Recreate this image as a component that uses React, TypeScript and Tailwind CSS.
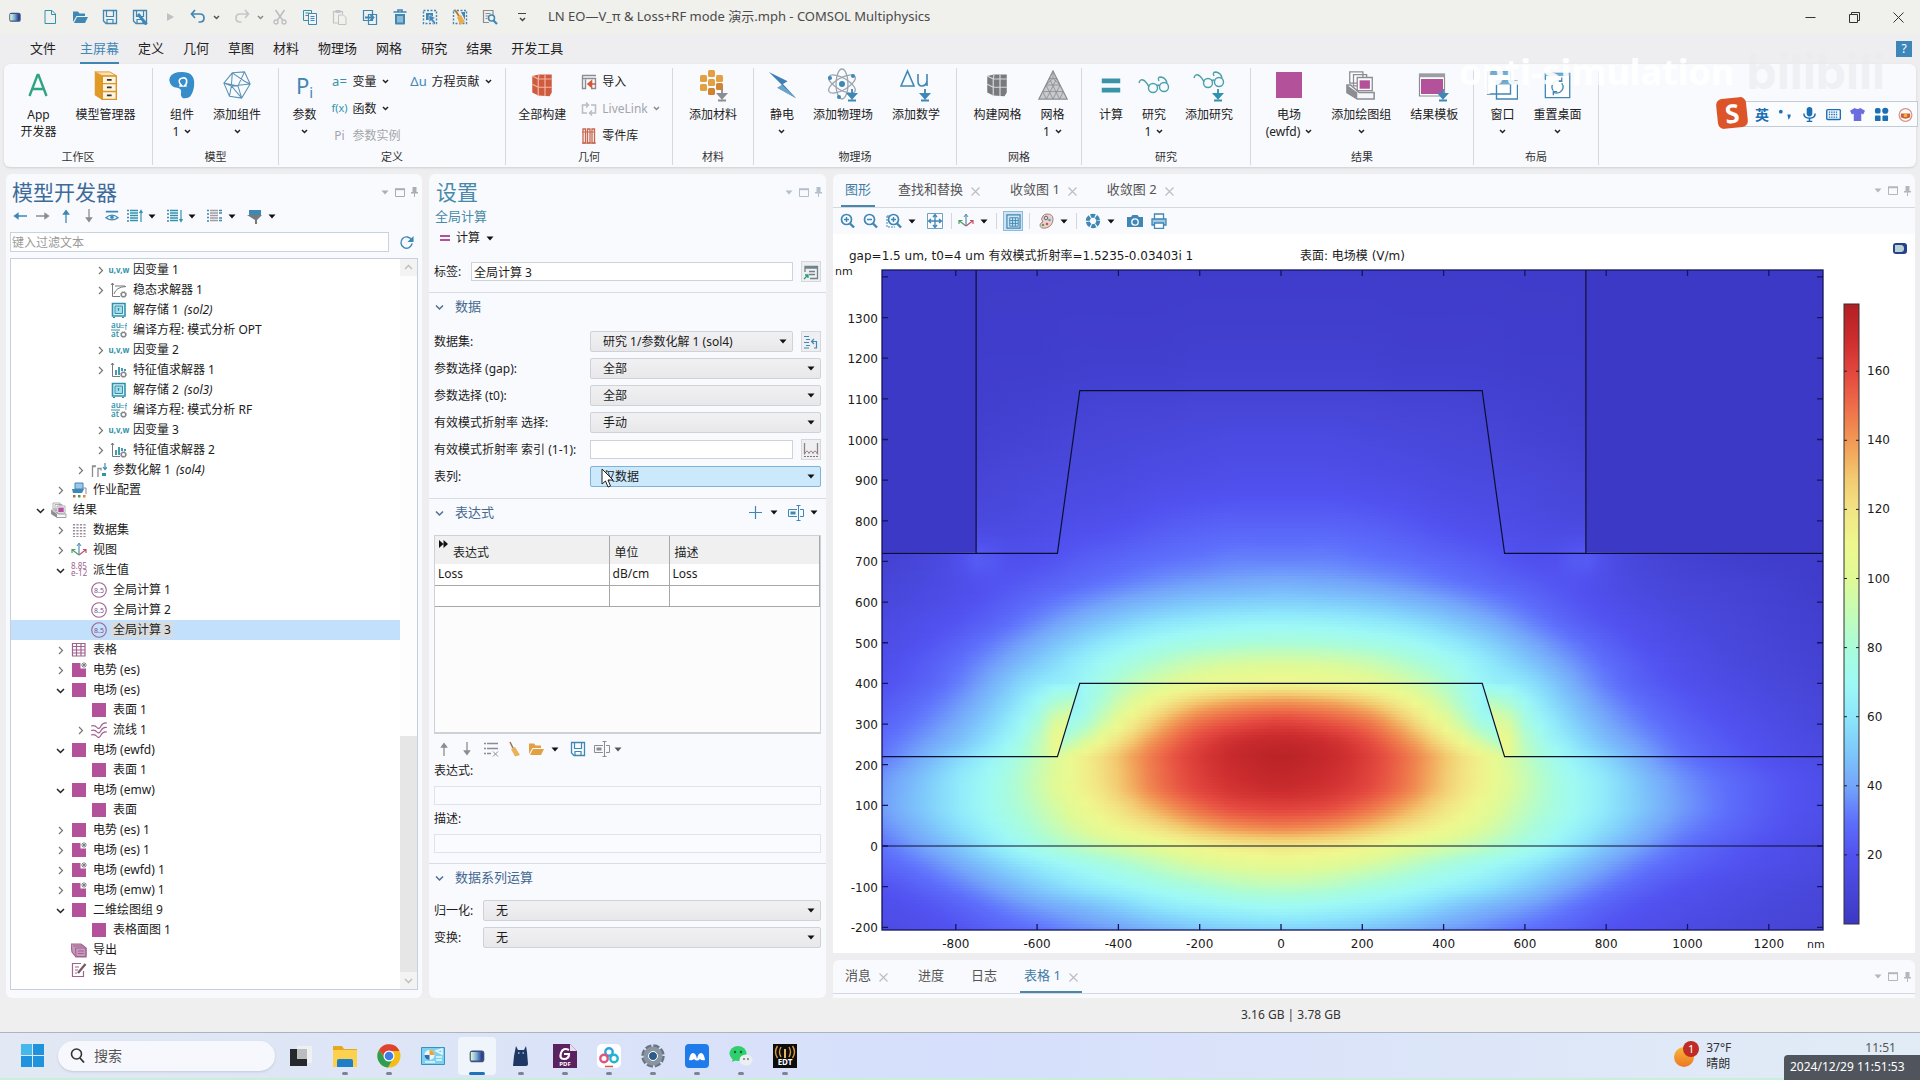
import type { ReactNode } from "react";

const BLUE = "#3f87b5";
const TEAL = "#3392ab";
const GRAY = "#8b8d92";
const PINK = "#b3529a";
const MAUVE = "#a0628f";

type SvgProps = { size?: number; vb?: number; className?: string; children: ReactNode };

function Svg({ size = 16, vb = 16, className = "", children }: SvgProps) {
  return (
    <svg width={size} height={size} viewBox={`0 0 ${vb} ${vb}`} fill="none" className={`shrink-0 ${className}`} aria-hidden="true">
      {children}
    </svg>
  );
}

/* ---------- small shared bits ---------- */

function Caret({ color = "#111" }: { color?: string }) {
  return (
    <svg width="8" height="5" viewBox="0 0 8 5" className="shrink-0" aria-hidden="true">
      <path d="M0.5 0.5h7L4 4.5z" fill={color} />
    </svg>
  );
}

function Chevron({ color = "#222" }: { color?: string }) {
  return (
    <svg width="7" height="5" viewBox="0 0 7 5" fill="none" className="shrink-0" aria-hidden="true">
      <path d="M1 1l2.5 2.5L6 1" stroke={color} strokeWidth="1.5" />
    </svg>
  );
}

function PanelControls({ tone = "#a9aeb5" }: { tone?: string }) {
  return (
    <div className="flex items-center gap-[6px]">
      <button type="button" aria-label="菜单">
        <Caret color={tone} />
      </button>
      <button type="button" aria-label="最大化">
        <svg width="10" height="9" viewBox="0 0 10 9" fill="none">
          <path d="M0.5 1.5h9v7h-9z" stroke={tone} />
          <path d="M0 1.2h10" stroke={tone} strokeWidth="2" />
        </svg>
      </button>
      <button type="button" aria-label="固定">
        <svg width="7" height="10" viewBox="0 0 7 10">
          <path d="M1.5 0h4v5H7v1.5H4V10H3V6.500H0V5h1.500z" fill={tone} />
        </svg>
      </button>
    </div>
  );
}

function AppLogo({ size = 16 }: { size?: number }) {
  return (
    <Svg size={size}>
      <defs>
        <linearGradient id={`logo${size}`} x1="0" x2="1">
          <stop offset="0" stopColor="#eef6c9" />
          <stop offset="0.45" stopColor="#7fb6dc" />
          <stop offset="1" stopColor="#1b2f78" />
        </linearGradient>
      </defs>
      <rect x="1.500" y="3" width="13" height="10.500" rx="2.500" fill="#3d4f86" />
      <path d="M2.500 4.500h8q2.500 0 2.500 3.700T10.500 12h-8z" fill={`url(#logo${size})`} />
    </Svg>
  );
}

/* ---------- title bar ---------- */

const NewDoc = () => (
  <Svg><path d="M3 1.500h7l3.500 3.500v9.500H3zM9.500 1.500v4h4" stroke={TEAL} /></Svg>
);
const Folder = ({ color = BLUE }: { color?: string }) => (
  <Svg><path d="M1 13V2.500h5l1.500 2H13V7H4.500L1 13z" fill={color} /><path d="M5 8h11l-3 6H2z" fill={color} /></Svg>
);
const Disk = ({ pen = false }: { pen?: boolean }) => (
  <Svg>
    <path d="M1.500 1.500h13v13H4l-2.500-2.500z" stroke={BLUE} strokeWidth="1.300" />
    <path d="M4.500 1.500v6h7v-6M5 14.500V10.500h6v4" stroke={BLUE} strokeWidth="1.200" />
    {pen && <path d="M6 5l8.500 10.500" stroke={BLUE} strokeWidth="3" />}
  </Svg>
);
const Undo = ({ color = BLUE, flip = false }: { color?: string; flip?: boolean }) => (
  <Svg className={flip ? "-scale-x-100" : ""}>
    <path d="M5 1L1.500 5 5 9M2 5h8q4 0 4 4t-4 4H8.500" stroke={color} strokeWidth="1.700" />
  </Svg>
);
const Cut = () => (
  <Svg>
    <path d="M3.500 1l7 10M12.500 1l-7 10" stroke="#bcbfc2" strokeWidth="1.600" />
    <circle cx="4" cy="13" r="2" stroke="#bcbfc2" strokeWidth="1.300" />
    <circle cx="12" cy="13" r="2" stroke="#bcbfc2" strokeWidth="1.300" />
  </Svg>
);
const Copy = () => (
  <Svg>
    <path d="M1.500 1.500h8v10h-8zM3.500 4h4M3.500 6.500h3" stroke={TEAL} />
    <path d="M6.500 4.500h8v11h-8z" fill="#eef6fb" stroke={BLUE} />
    <path d="M8.500 7.500h4M8.500 9.500h4M8.500 11.500h4" stroke={BLUE} />
  </Svg>
);
const Paste = () => (
  <Svg>
    <path d="M6 14H1.500V2.500h9V5M4 1.500h4v2H4z" stroke="#c0c3c6" strokeWidth="1.200" />
    <path d="M6.500 6h5l2.500 2.500v7H6.500z" stroke="#c0c3c6" />
  </Svg>
);
const Duplicate = () => (
  <Svg>
    <path d="M1.500 1.500h9v10h-9zM6.500 5.500h8v10h-8z" stroke={BLUE} strokeWidth="1.200" />
    <path d="M3 8.500h8M8.500 5.500l3 3-3 3" stroke={BLUE} strokeWidth="1.800" />
  </Svg>
);
const Trash = () => (
  <Svg>
    <path d="M1.500 3h13M6 2.500V1h4v1.500" stroke={BLUE} strokeWidth="1.600" />
    <path d="M3 5h10v9.500q0 1-1 1H4q-1 0-1-1z" fill={BLUE} />
    <path d="M6 7v6.500M8 7v6.500M10 7v6.500" stroke="#dcebf5" />
  </Svg>
);
const SelectBox = () => (
  <Svg>
    <path d="M1.500 1.500h13v13h-13z" stroke={BLUE} strokeWidth="1.400" strokeDasharray="2 1.500" />
    <path d="M4 4h7v7H4z" fill={BLUE} />
    <path d="M7 6l7 3-3 1 3 4-1.500 1.500-3.500-4-2 2z" fill={BLUE} stroke="#eef" strokeWidth="0.600" />
  </Svg>
);
const BrushSelect = () => (
  <Svg>
    <path d="M1.500 1.500h13v13h-13z" stroke={BLUE} strokeWidth="1.400" strokeDasharray="2 1.500" />
    <path d="M9 3h4v8z" fill={BLUE} />
    <path d="M3 1l4 6" stroke="#b77a35" strokeWidth="2" />
    <path d="M5 8l4-2 4 7-5 3z" fill="#e9ac50" />
  </Svg>
);
const DocSearch = () => (
  <Svg>
    <path d="M11 7V1.500H1.500v12H7M3.500 4.500h5M3.500 7h3M3.500 9.500h2" stroke={GRAY} strokeWidth="1.200" />
    <circle cx="9.500" cy="9" r="3" stroke={BLUE} strokeWidth="1.500" />
    <path d="M11.500 11.500l3.500 3.500" stroke={BLUE} strokeWidth="2.200" />
  </Svg>
);

function TitleBar() {
  const tools: [string, ReactNode][] = [
    ["新建", <NewDoc />],
    ["打开", <Folder />],
    ["保存", <Disk />],
    ["另存为", <Disk pen />],
    ["运行", <Svg><path d="M5 4l7 4-7 4z" fill="#bfc2c5" /></Svg>],
  ];
  const edit: [string, ReactNode][] = [
    ["剪切", <Cut />],
    ["复制", <Copy />],
    ["粘贴", <Paste />],
    ["复制粘贴", <Duplicate />],
    ["删除", <Trash />],
    ["选择", <SelectBox />],
    ["清除选择", <BrushSelect />],
    ["查找", <DocSearch />],
  ];
  return (
    <header className="flex h-[34px] items-center bg-[#f0f0ed] pl-2 pr-4">
      <AppLogo size={14} />
      <div className="ml-5 flex items-center gap-[14px]">
        {tools.map(([label, icon]) => (
          <button key={label} type="button" aria-label={label}>{icon}</button>
        ))}
      </div>
      <div className="ml-3 flex items-center gap-[6px]">
        <button type="button" aria-label="撤消" className="flex items-center gap-[7px]"><Undo /><Chevron color="#555" /></button>
        <button type="button" aria-label="重做" className="ml-2 flex items-center gap-[7px]"><Undo color="#c3c6c9" flip /><Chevron color="#888" /></button>
      </div>
      <div className="ml-2 flex items-center gap-[14px]">
        {edit.map(([label, icon]) => (
          <button key={label} type="button" aria-label={label}>{icon}</button>
        ))}
      </div>
      <button type="button" aria-label="自定义" className="ml-5 flex flex-col items-center gap-[3px]">
        <span className="h-px w-2 bg-[#444]" />
        <Chevron color="#444" />
      </button>
      <h1 className="ml-[22px] text-[13px] text-[#4a4a4a]">LN EO—V_π &amp; Loss+RF mode 演示.mph - COMSOL Multiphysics</h1>
      <div className="ml-auto flex items-center gap-[33px] text-[#333]">
        <button type="button" aria-label="最小化"><Svg size={11} vb={11}><path d="M0.500 5.500h10" stroke="#333" /></Svg></button>
        <button type="button" aria-label="还原"><Svg size={11} vb={11}><path d="M0.500 2.500h8v8h-8zM2.500 2.500v-2h8v8h-2" stroke="#333" /></Svg></button>
        <button type="button" aria-label="关闭"><Svg size={11} vb={11}><path d="M0.500 0.500l10 10M10.500 0.500l-10 10" stroke="#333" /></Svg></button>
      </div>
    </header>
  );
}

const MENU = ["定义", "几何", "草图", "材料", "物理场", "网格", "研究", "结果", "开发工具"];

function MenuTabs() {
  return (
    <nav className="flex h-[30px] items-stretch gap-[19px] pl-[30px] pr-2 text-[13px] text-[#222]">
      <a href="#file" className="mr-[5px] flex items-center">文件</a>
      <a href="#home" className="flex items-center border-b-2 border-[#3f87b5] pt-[2px] text-[#3f87b5]">主屏幕</a>
      {MENU.map((m) => (
        <a key={m} href={`#${m}`} className="flex items-center">{m}</a>
      ))}
      <button type="button" className="ml-auto h-4 w-4 self-center bg-[#3d86ba] text-[12px] leading-4 text-white">?</button>
    </nav>
  );
}

/* ---------- ribbon icons ---------- */

const DownArrow = ({ color = BLUE }: { color?: string }) => (
  <path d="M26 21v8M22 26h8l-4 4.500zM22 32.500h8" stroke={color} strokeWidth="1.800" fill={color} />
);
const Cabinet = () => (
  <Svg size={30} vb={32}>
    <path d="M4 2l8 4v26L4 27z" fill="#e09a27" />
    <path d="M4 2h16l7 4H12z" fill="#f7e2bb" stroke="#e09a27" />
    <path d="M12 6.500h15v25H12zM12 14.500h15M12 23h15" fill="#fdf4e2" stroke="#dd9423" strokeWidth="1.500" />
    <path d="M17 10.500h5M17 18.500h5M17 27h5" stroke="#333" strokeWidth="1.800" />
  </Svg>
);
const Blob = () => (
  <Svg size={30} vb={32}>
    <path d="M3 8q2-6 13-6 13 0 13 12 0 8-4 14-3 3-8 2-3-2-2-6 1-4-4-5-7-1-8-6-1-3 0-5z" fill="#368dc9" />
    <path d="M13 17h3q-3-2-3-5t4-3.500 4 3.500-3 5h3" stroke="#fff" strokeWidth="1.700" />
  </Svg>
);
const WireCube = () => (
  <Svg size={30} vb={32}>
    <path d="M11 3l13-1 6 13-9 15-13-2L2 14zM2 14l15 3 7-15M17 17l4 13M11 3l-1 14 11 13M2 14l8 3 20-2M11 3l13 9 6 3M8 28l2-11" stroke="#5a93b5" strokeWidth="1.100" />
  </Svg>
);
const SolidCube = ({ color, light }: { color: string; light: string }) => (
  <Svg size={24} vb={32}>
    <path d="M3 4l9-2h17v24l-3 5-15-1-8-4z" fill={color} />
    <path d="M11 8h18M11 8v23M20 8v23M11 19h18M3 4l8 4M3 15l8 4M12 2l-1 6M20 2v6" stroke={light} strokeWidth="1.600" />
  </Svg>
);
const Blocks = () => (
  <Svg size={34} vb={34}>
    <g fill="#e3a043">
      <rect x="12" y="2" width="7" height="7" rx="1.500" /><rect x="4" y="7" width="7" height="7" rx="1.500" />
      <rect x="20" y="7" width="7" height="7" rx="1.500" /><rect x="12" y="11" width="7" height="7" rx="1.500" />
      <rect x="4" y="16" width="7" height="7" rx="1.500" />
    </g>
    <g fill="#d0842f"><rect x="20" y="15" width="7" height="7" rx="1.500" /><rect x="12" y="20" width="7" height="7" rx="1.500" /></g>
    <DownArrow color={GRAY} />
  </Svg>
);
const Bolt = () => (
  <Svg size={30} vb={32}><path d="M2 2l20 10-5 3 14 15-20-11 5-3z" fill="#3f7fb5" /><path d="M16 16l15 14-20-11z" fill="#6ba5cb" /></Svg>
);
const Atom = () => (
  <Svg size={34} vb={34}>
    <g stroke="#9aa5ae" strokeWidth="1.300">
      <ellipse cx="16" cy="16" rx="6" ry="15" />
      <ellipse cx="16" cy="16" rx="6" ry="15" transform="rotate(60 16 16)" />
      <ellipse cx="16" cy="16" rx="6" ry="15" transform="rotate(-60 16 16)" />
    </g>
    <g fill={BLUE}><circle cx="16" cy="16" r="3" /><circle cx="4" cy="10" r="2" /><circle cx="27" cy="8" r="2" /><circle cx="13" cy="29" r="2" /></g>
    <DownArrow />
  </Svg>
);
const DeltaU = () => (
  <Svg size={34} vb={34}>
    <path d="M2 18L8.500 3 15 18zM19 6v7q0 5 4 5t5-5V6v12" stroke={BLUE} strokeWidth="1.600" />
    <DownArrow />
  </Svg>
);
const MeshTriangle = () => (
  <Svg size={30} vb={32}>
    <path d="M16 1l15 30H1z" fill="#c9cacc" stroke={GRAY} strokeWidth="1.300" />
    <path d="M12 9h8M8.500 16h15M5 23h22M12 9l11 22M20 9L9 31M8.500 16L16 31M23.500 16L16 31M5 23l4 8M27 23l-4 8M16 1v8l-7.500 7M16 9l7.500 7" stroke={GRAY} strokeWidth="0.900" />
  </Svg>
);
const Equals = () => (
  <Svg size={24} vb={26}><path d="M3 8.500h20M3 18.500h20" stroke="#3a93a8" strokeWidth="5" /></Svg>
);
const Glasses = ({ arrow = false }: { arrow?: boolean }) => (
  <Svg size={34} vb={34}>
    <g transform={arrow ? "translate(0 -5)" : ""}>
      <circle cx="16" cy="20" r="4.500" stroke="#4aa0ab" strokeWidth="1.400" />
      <circle cx="27" cy="19" r="4.500" stroke="#4aa0ab" strokeWidth="1.400" />
      <path d="M2 15q1-4 4-3t6 7M22 13q-2-4 2-4 5 1 6 6M20 18q1.500-2 2.500 0" stroke="#4aa0ab" strokeWidth="1.400" />
    </g>
    {arrow && <DownArrow color={TEAL} />}
  </Svg>
);
const PlotSquare = () => (
  <Svg size={26} vb={26}><path d="M0 0h26v26H0z" fill={PINK} /></Svg>
);
const PlotStack = ({ size = 30 }: { size?: number }) => (
  <Svg size={size} vb={32}>
    <path d="M1 16v8l11 7h18v-7H14L5 16z" fill="#f6f6f8" stroke={GRAY} strokeWidth="1.600" />
    <path d="M1 16v8l11 7v-7z" fill={GRAY} />
    <path d="M4 2h14v12H4zM8 5h14v12H8z" fill="#fff" stroke={GRAY} strokeWidth="1.400" />
    <path d="M12 8h16v14H12z" fill="#fff" stroke={GRAY} strokeWidth="1.400" />
    <path d="M14.500 11h11v9h-11z" fill={PINK} />
  </Svg>
);
const ResultTemplate = () => (
  <Svg size={34} vb={34}>
    <path d="M2.500 6h25v22h-25z" fill="#fff" stroke={GRAY} strokeWidth="1.200" />
    <path d="M2 7.500h26" stroke="#9b9da2" strokeWidth="3.500" />
    <path d="M4 11h22v15H4z" fill={PINK} />
    <DownArrow />
  </Svg>
);
const Windows = () => (
  <Svg size={32} vb={32}>
    <path d="M1.500 3h23v22h-23zM10.500 12h21v18h-21z" fill="#fff" stroke={BLUE} strokeWidth="1.400" />
    <path d="M1.500 4.500h23M10.500 14h21" stroke="#74abd0" strokeWidth="3" />
  </Svg>
);
const ResetDesk = () => (
  <Svg size={30} vb={32}>
    <path d="M2.500 3.500h26v26h-26z" fill="#fff" stroke={BLUE} strokeWidth="1.400" />
    <path d="M2.500 5h26" stroke="#74abd0" strokeWidth="3" />
    <path d="M20 12q-6-2.500-9 2t0 8M11 24q6 2 9-2t0-8M20 8v4h-4M11 27v-4h4" stroke={BLUE} strokeWidth="1.400" />
  </Svg>
);
const ImportIcon = () => (
  <Svg><path d="M1 1.500h14M1.500 1.500v13h3v-9M1.500 4.500h13v10H10" stroke={GRAY} strokeWidth="1.400" /><path d="M15 10H8M10.500 7L7 10l3.500 3z" stroke="#cf5b3a" strokeWidth="1.600" fill="#cf5b3a" /></Svg>
);
const LinkIcon = () => (
  <Svg><path d="M6 12H1.500V4H7M10 4h4.500v8H9M5 1.500L7.500 4 5 6.500M11 9.500L8.500 12l2.500 2.500" stroke="#b9bcc0" strokeWidth="1.500" /></Svg>
);
const PartsIcon = () => (
  <Svg><path d="M2 1h2.500v14H2zM6.500 1H9v14H6.500zM11 1h2.500v14H11z" stroke="#c8674d" strokeWidth="1.300" /><path d="M1 4h13M1 15h14" stroke="#c8674d" /></Svg>
);

type BigProps = { icon: ReactNode; label: string; sub?: string; drop?: boolean };

// the icon takes no width, so the text alone spaces the buttons
function BigButton({ icon, label, sub, drop = false }: BigProps) {
  return (
    <button type="button" className="flex flex-col items-center whitespace-nowrap">
      <span className="flex h-[34px] w-0 items-center justify-center">{icon}</span>
      <span className="mt-1 block leading-[17px]">{label}</span>
      <span className="flex h-[17px] items-center gap-[5px] leading-[17px]">
        {sub}
        {drop && <Chevron />}
      </span>
    </button>
  );
}

function SmallButton({ icon, label, drop = false, off = false }: { icon: ReactNode; label: string; drop?: boolean; off?: boolean }) {
  return (
    <button type="button" disabled={off} className={`flex h-[27px] items-center gap-[5px] whitespace-nowrap ${off ? "text-[#a3a5a9]" : "text-[#222]"}`}>
      <span className="flex w-4 items-center justify-center">{icon}</span>
      {label}
      {drop && <Chevron color={off ? "#888" : "#222"} />}
    </button>
  );
}

function Group({ title, className, children }: { title: string; className: string; children: ReactNode }) {
  return (
    <section className={`mb-[2px] mt-1 flex shrink-0 flex-col border-r border-[#d5d8de] ${className}`}>
      <div className="flex flex-1 justify-center gap-[19px]">{children}</div>
      <h2 className="text-center text-[11px] leading-4 text-[#333]">{title}</h2>
    </section>
  );
}

function Ribbon() {
  return (
    <div className="mx-1 flex h-[103px] rounded-md bg-[#f9fafe] text-[12px] text-[#222] shadow-sm">
      <Group title="工作区" className="w-[149px]">
        <BigButton icon={<Svg size={24} vb={24}><path d="M3.500 23L11.500 2h1l8 21M6.500 16h11" stroke="#2fa483" strokeWidth="2.400" /></Svg>} label="App" sub="开发器" />
        <BigButton icon={<Cabinet />} label="模型管理器" />
      </Group>
      <Group title="模型" className="w-[126px]">
        <BigButton icon={<Blob />} label="组件" sub="1" drop />
        <BigButton icon={<WireCube />} label="添加组件" drop />
      </Group>
      <Group title="定义" className="w-[227px]">
        <BigButton icon={<span className="text-[22px] leading-7 text-[#3f87b5]">P<sub className="text-[15px]">i</sub></span>} label="参数" drop />
        <div className="-ml-1 flex flex-col">
          <SmallButton icon={<span className="text-[13px] text-[#3392ab]">a=</span>} label="变量" drop />
          <SmallButton icon={<span className="text-[11px] text-[#3392ab]">f(x)</span>} label="函数" drop />
          <SmallButton icon={<span className="text-[12px]">Pi</span>} label="参数实例" off />
        </div>
        <div className="-ml-[9px]">
          <SmallButton icon={<span className="text-[13px] text-[#3f87b5]">Δu</span>} label="方程贡献" drop />
        </div>
      </Group>
      <Group title="几何" className="w-[167px]">
        <BigButton icon={<SolidCube color="#cf5b3f" light="#f2b6a4" />} label="全部构建" />
        <div className="-ml-1 flex flex-col">
          <SmallButton icon={<ImportIcon />} label="导入" />
          <SmallButton icon={<LinkIcon />} label="LiveLink" drop off />
          <SmallButton icon={<PartsIcon />} label="零件库" />
        </div>
      </Group>
      <Group title="材料" className="w-[81px]">
        <BigButton icon={<Blocks />} label="添加材料" />
      </Group>
      <Group title="物理场" className="w-[203px]">
        <BigButton icon={<Bolt />} label="静电" drop />
        <BigButton icon={<Atom />} label="添加物理场" />
        <BigButton icon={<DeltaU />} label="添加数学" />
      </Group>
      <Group title="网格" className="w-[125px]">
        <BigButton icon={<SolidCube color="#797a7e" light="#d6d7da" />} label="构建网格" />
        <BigButton icon={<MeshTriangle />} label="网格" sub="1" drop />
      </Group>
      <Group title="研究" className="w-[169px]">
        <BigButton icon={<Equals />} label="计算" />
        <BigButton icon={<Glasses />} label="研究" sub="1" drop />
        <BigButton icon={<Glasses arrow />} label="添加研究" />
      </Group>
      <Group title="结果" className="w-[223px]">
        <BigButton icon={<PlotSquare />} label="电场" sub="(ewfd)" drop />
        <BigButton icon={<PlotStack />} label="添加绘图组" drop />
        <BigButton icon={<ResultTemplate />} label="结果模板" />
      </Group>
      <Group title="布局" className="w-[125px]">
        <BigButton icon={<Windows />} label="窗口" drop />
        <BigButton icon={<ResetDesk />} label="重置桌面" drop />
      </Group>
    </div>
  );
}

/* ---------- model tree ---------- */

const Uvw = () => <span className="text-[8px] font-bold leading-4 text-[#3392ab]">u,v,w</span>;
const Gear = () => (
  <g><circle cx="12.500" cy="12.500" r="2.200" stroke="#85878b" strokeWidth="1.300" /><circle cx="12.500" cy="12.500" r="3" stroke="#85878b" strokeWidth="1" strokeDasharray="1 1.350" /></g>
);
const Stationary = () => (
  <Svg><path d="M1.500 1v13.500H9M0 3l1.500-2L3 3M3 12q2-7 12-7.500M4 4h10" stroke="#76797d" /><Gear /></Svg>
);
const Eigen = () => (
  <Svg><path d="M1.500 1v13.500H9M0 3l1.500-2L3 3" stroke="#76797d" /><path d="M5 13V8M8 13V5M11 9V6M14 9V7" stroke={TEAL} strokeWidth="1.800" /><Gear /></Svg>
);
const Store = () => (
  <Svg><path d="M1.500 1.500h12.500v12.500h-12.500z" stroke={TEAL} strokeWidth="1.600" fill="#d7f1f8" /><path d="M4 4h7.500v7.500H4z" stroke={TEAL} fill="#a7dceb" /><path d="M7.500 6v3M6.500 7h2M2 15.500h2M11 15.500h2" stroke={TEAL} /></Svg>
);
const Compile = () => (
  <Svg>
    <text x="0" y="6" fontSize="8" fontWeight="600" fill={TEAL}>au</text><text x="0" y="15" fontSize="8" fontWeight="600" fill={TEAL}>at</text>
    <path d="M0 8h9" stroke={TEAL} /><text x="9" y="8" fontSize="8" fill={TEAL}>=f</text><Gear />
  </Svg>
);
const ParamSol = () => (
  <Svg><path d="M1.500 15V4.500h3M7 15V6.500h3v2M1 4h4" stroke={GRAY} strokeWidth="1.300" /><path d="M11 11h4v3h-4z" fill={TEAL} /><path d="M14 1v6M12 5l2 2.500L16 5" stroke={BLUE} strokeWidth="1.200" /></Svg>
);
const JobConf = () => (
  <Svg><path d="M4 1h8v6H4z" fill="#9cc6ea" stroke={BLUE} /><path d="M1 7h12l-2 4H2z" fill={BLUE} /><path d="M12 6h3v6" stroke={GRAY} /><path d="M2 13h2.500v2.500H2z" fill="#b86b3a" /><path d="M7 13h2.500v2.500H7z" fill="#3f9a5f" /><path d="M12 13h2.500v2.500H12z" fill="#d68b2f" /></Svg>
);
const DataSet = () => (
  <Svg><path d="M3 2v13M6.500 2v13M10 2v13M13.500 2v13" stroke="#9b8f9b" strokeWidth="2.200" strokeDasharray="1.500 1.500" /></Svg>
);
const Axes = () => (
  <Svg><path d="M8 13V2" stroke="#4a8fae" strokeWidth="1.200" /><path d="M6 4l2-3 2 3" stroke="#4a8fae" /><path d="M8 13L1.500 8M1 11V7.500h3.500" stroke="#4f9d63" strokeWidth="1.200" /><path d="M8 13l6.500-5M12 7.500h3V11" stroke="#c0516b" strokeWidth="1.200" /></Svg>
);
const Derived = () => (
  <Svg><text x="0" y="7" fontSize="8" fill={MAUVE}>8.85</text><text x="0" y="14" fontSize="8" fill={MAUVE}>e-12</text></Svg>
);
const Eval = () => (
  <Svg><circle cx="8" cy="8" r="7.300" stroke={MAUVE} strokeWidth="1.100" /><text x="8" y="10.500" fontSize="7" textAnchor="middle" fill="#7a4f8f">8.5</text></Svg>
);
const TableIcon = () => (
  <Svg><path d="M1.500 1.500h12.500v12.500h-12.500zM1.500 4.500h12.500M1.500 8h12.500M1.500 11h12.500M5.500 1.500v12.500M10 1.500v12.500" stroke={MAUVE} strokeWidth="1.200" /></Svg>
);
const Square = ({ star = false }: { star?: boolean }) => (
  <Svg>
    {star ? <path d="M1 1h8.500v5.500H15V15H1z" fill={PINK} /> : <path d="M1 1h14v14H1z" fill={PINK} />}
    {star && <path d="M13 0v6M10 3h6M11 1l4 4M15 1l-4 4" stroke="#76797d" strokeWidth="0.900" />}
  </Svg>
);
const Stream = () => (
  <Svg><path d="M0 4q4-1 6 1.500T10 4t6-3M0 8.500q4-1 6 1.500t4-1.500 6-3M0 13q4-1 6 1.500t4-1.500 6-3" stroke={MAUVE} strokeWidth="1.200" /></Svg>
);
const ExportIcon = () => (
  <Svg><path d="M0 2h10l5 4v9H5L1 10z" fill="#c79abd" stroke={MAUVE} strokeWidth="1.200" /><path d="M4.500 6h10.500v8.500H5zM7 9h6M7 11.500h6M2 4h10" stroke={MAUVE} fill="none" /></Svg>
);
const ReportIcon = () => (
  <Svg><path d="M10 1.500H1.500v13h11V9M4 5h4M4 8h3M4 11h2" stroke={MAUVE} strokeWidth="1.200" /><path d="M14.500 2L7 11" stroke="#76595f" strokeWidth="2.200" /></Svg>
);

type Node = { level: number; icon: ReactNode; label: string; note?: string; open?: boolean; leaf?: boolean; selected?: boolean };

const TREE: Node[] = [
  { level: 3, icon: <Uvw />, label: "因变量 1" },
  { level: 3, icon: <Stationary />, label: "稳态求解器 1" },
  { level: 3, icon: <Store />, label: "解存储 1", note: "(sol2)", leaf: true },
  { level: 3, icon: <Compile />, label: "编译方程: 模式分析 OPT", leaf: true },
  { level: 3, icon: <Uvw />, label: "因变量 2" },
  { level: 3, icon: <Eigen />, label: "特征值求解器 1" },
  { level: 3, icon: <Store />, label: "解存储 2", note: "(sol3)", leaf: true },
  { level: 3, icon: <Compile />, label: "编译方程: 模式分析 RF", leaf: true },
  { level: 3, icon: <Uvw />, label: "因变量 3" },
  { level: 3, icon: <Eigen />, label: "特征值求解器 2" },
  { level: 2, icon: <ParamSol />, label: "参数化解 1", note: "(sol4)" },
  { level: 1, icon: <JobConf />, label: "作业配置" },
  { level: 0, icon: <PlotStack size={16} />, label: "结果", open: true },
  { level: 1, icon: <DataSet />, label: "数据集" },
  { level: 1, icon: <Axes />, label: "视图" },
  { level: 1, icon: <Derived />, label: "派生值", open: true },
  { level: 2, icon: <Eval />, label: "全局计算 1", leaf: true },
  { level: 2, icon: <Eval />, label: "全局计算 2", leaf: true },
  { level: 2, icon: <Eval />, label: "全局计算 3", leaf: true, selected: true },
  { level: 1, icon: <TableIcon />, label: "表格" },
  { level: 1, icon: <Square star />, label: "电势 (es)" },
  { level: 1, icon: <Square />, label: "电场 (es)", open: true },
  { level: 2, icon: <Square />, label: "表面 1", leaf: true },
  { level: 2, icon: <Stream />, label: "流线 1" },
  { level: 1, icon: <Square />, label: "电场 (ewfd)", open: true },
  { level: 2, icon: <Square />, label: "表面 1", leaf: true },
  { level: 1, icon: <Square />, label: "电场 (emw)", open: true },
  { level: 2, icon: <Square />, label: "表面", leaf: true },
  { level: 1, icon: <Square />, label: "电势 (es) 1" },
  { level: 1, icon: <Square star />, label: "电场 (es) 1" },
  { level: 1, icon: <Square star />, label: "电场 (ewfd) 1" },
  { level: 1, icon: <Square star />, label: "电场 (emw) 1" },
  { level: 1, icon: <Square />, label: "二维绘图组 9", open: true },
  { level: 2, icon: <Square />, label: "表格面图 1", leaf: true },
  { level: 1, icon: <ExportIcon />, label: "导出", leaf: true },
  { level: 1, icon: <ReportIcon />, label: "报告", leaf: true },
];

const INDENT = ["pl-6", "pl-11", "pl-16", "pl-[84px]"];

function TreeRow({ node }: { node: Node }) {
  return (
    <li className={`flex h-5 items-center whitespace-nowrap ${INDENT[node.level]} ${node.selected ? "bg-[#c2e0fb]" : ""}`}>
      <span className="flex w-[10px] shrink-0 justify-center">
        {!node.leaf && (
          <Svg size={9} vb={9}>
            {node.open ? <path d="M1 3l3.500 3.500L8 3" stroke="#222" strokeWidth="1.500" /> : <path d="M3 1l3.500 3.500L3 8" stroke="#777" strokeWidth="1.200" />}
          </Svg>
        )}
      </span>
      <span className="ml-1 flex w-5 shrink-0 items-center justify-center overflow-visible">{node.icon}</span>
      <span className={`ml-[2px] px-[2px] leading-4 ${node.selected ? "bg-[#d9dcdf]" : ""}`}>
        {node.label}
        {node.note && <em className="ml-[5px]">{node.note}</em>}
      </span>
    </li>
  );
}

const ArrowIcon = ({ turn = "", color = BLUE }: { turn?: string; color?: string }) => (
  <Svg size={14} vb={14} className={turn}>
    <path d="M14 7H2M5 4.500L1.500 7 5 9.500z" stroke={color} strokeWidth="1.300" fill={color} />
  </Svg>
);
const ListIcon = ({ color = TEAL, arrow }: { color?: string; arrow?: "up" | "down" }) => (
  <Svg>
    <path d="M0 2.500h2M0 6h2M0 9.500h2M0 13h2" stroke={BLUE} strokeWidth="1.400" />
    <path d="M3 2.500h8M3 5h8M3 7.500h8M3 10h8M3 12.500h8" stroke={color} strokeWidth="1.300" />
    {arrow === "up" && <path d="M14 14V3M12.500 5L14 2.500 15.500 5" stroke={color} strokeWidth="1.200" />}
    {arrow === "down" && <path d="M14 2v11M12.500 11l1.500 2.500 1.500-2.500" stroke={color} strokeWidth="1.200" />}
    {!arrow && <path d="M12 2.500h3M12 5h3M12 10h3M12 12.500h3" stroke={BLUE} strokeWidth="1.300" />}
  </Svg>
);

function ModelBuilder() {
  return (
    <aside className="flex w-[416px] shrink-0 flex-col rounded-md bg-[#f9fafe] px-1 pb-2">
      <div className="flex h-[34px] items-center justify-between pl-[2px] pt-[2px]">
        <h2 className="text-[21px] leading-7 text-[#3d6a99]">模型开发器</h2>
        <PanelControls />
      </div>
      <div className="flex h-4 items-center pl-[3px]">
        <div className="flex items-center gap-[9px]">
          <button type="button" aria-label="后退"><ArrowIcon /></button>
          <button type="button" aria-label="前进"><ArrowIcon turn="rotate-180" color={GRAY} /></button>
          <button type="button" aria-label="上移"><ArrowIcon turn="rotate-90" /></button>
          <button type="button" aria-label="下移"><ArrowIcon turn="-rotate-90" color={GRAY} /></button>
          <button type="button" aria-label="显示">
            <Svg size={14} vb={16}><path d="M1 3h14" stroke={BLUE} strokeWidth="2" /><path d="M1 10q7-6 14 0-7 5-14 0z" stroke={BLUE} strokeWidth="1.300" /><circle cx="8" cy="9.500" r="2" fill={BLUE} /></Svg>
          </button>
        </div>
        <button type="button" aria-label="折叠" className="ml-2 flex items-center gap-[5px]"><ListIcon arrow="up" /><Caret /></button>
        <button type="button" aria-label="展开" className="ml-[11px] flex items-center gap-[5px]"><ListIcon arrow="down" /><Caret /></button>
        <button type="button" aria-label="节点文本" className="ml-[11px] flex items-center gap-[5px]"><ListIcon color="#a09ca4" /><Caret /></button>
        <button type="button" aria-label="筛选" className="ml-[11px] flex items-center gap-[5px]">
          <Svg><path d="M2 2h12v5H2z" fill={BLUE} /><path d="M0 7h15l-5 5v4H8v-4z" fill="#76797d" /></Svg>
          <Caret />
        </button>
      </div>
      <div className="mt-2 flex items-center">
        <input aria-label="过滤" placeholder="键入过滤文本" className="h-5 flex-1 border border-[#c9d3dc] bg-white px-[1px] text-[12px] placeholder-[#9a9a9a] outline-none" />
        <button type="button" aria-label="刷新" className="ml-[10px] mr-1">
          <Svg size={15} vb={16}><path d="M13.500 5.500A6 6 0 1 0 14 9" stroke={BLUE} strokeWidth="1.500" /><path d="M15.500 1v6.500H9z" fill={BLUE} /></Svg>
        </button>
      </div>
      <div className="mt-[6px] flex flex-1 border border-[#c6d0dc] bg-white">
        <ul className="flex-1 pt-px text-[12px] text-[#1c1c1c]">
          {TREE.map((n, i) => <TreeRow key={i} node={n} />)}
        </ul>
        <div className="flex w-[17px] flex-col bg-[#fdfdfd]">
          <span className="flex h-[17px] items-center justify-center bg-[#f3f3f3]"><Svg size={9} vb={9}><path d="M1 6l3.500-3.500L8 6" stroke="#bbb" strokeWidth="1.300" /></Svg></span>
          <span className="grow-[461]" />
          <span className="grow-[237] bg-[#e6e6e6]" />
          <span className="flex h-[17px] items-center justify-center bg-[#f3f3f3]"><Svg size={9} vb={9}><path d="M1 3l3.500 3.500L8 3" stroke="#bbb" strokeWidth="1.300" /></Svg></span>
        </div>
      </div>
    </aside>
  );
}

/* ---------- settings ---------- */

function Select({ id, value, hot = false }: { id: string; value: string; hot?: boolean }) {
  return (
    <div className="relative flex-1">
      <select
        id={id}
        defaultValue={value}
        className={`block h-[21px] w-full appearance-none rounded-[2px] border pl-3 text-[12px] leading-4 text-[#1c1c1c] outline-none ${
          hot ? "border-[#7fb2d6] bg-[#cce8fb]" : "border-[#cfd2d6] bg-linear-to-b from-[#f1f1f3] to-[#e8e8ea]"
        }`}
      >
        <option>{value}</option>
      </select>
      <span className="pointer-events-none absolute right-[6px] top-2"><Caret /></span>
    </div>
  );
}

function IconBox({ label, children }: { label: string; children: ReactNode }) {
  return (
    <button type="button" aria-label={label} className="ml-2 flex h-[21px] w-5 items-center justify-center border border-[#d5d7da] bg-[#efeff1]">
      {children}
    </button>
  );
}

function Field({ id, label, children }: { id: string; label: string; children: ReactNode }) {
  return (
    <div className="flex h-[27px] items-center">
      <label htmlFor={id} className="w-[156px] whitespace-nowrap">{label}</label>
      {children}
    </div>
  );
}

function SectionTitle({ title, children }: { title: string; children?: ReactNode }) {
  return (
    <div className="flex h-7 items-center border-t border-[#d9dce2] pl-[6px] pr-2">
      <Svg size={9} vb={9}><path d="M1 3.500L4.500 7 8 3.500" stroke="#4d7094" strokeWidth="1.500" /></Svg>
      <h3 className="ml-[11px] text-[13px] text-[#44688f]">{title}</h3>
      {children}
    </div>
  );
}

const RangeInsert = ({ color = BLUE }: { color?: string }) => (
  <Svg><path d="M9 4.500H0.500v7H9M12 4.500h3.500v7H12M10.500 1v14M8.500 0.500h4M8.500 15.500h4" stroke={color} /><path d="M2.500 6.500h5v3h-5z" fill={color} /></Svg>
);

function Settings() {
  return (
    <section className="flex w-[397px] shrink-0 flex-col rounded-md bg-[#f9fafe] text-[12px] text-[#1c1c1c]">
      <div className="flex h-[34px] items-center justify-between pl-[7px] pr-1 pt-[2px]">
        <h2 className="text-[21px] leading-7 text-[#4689ab]">设置</h2>
        <PanelControls tone="#b3bfcc" />
      </div>
      <p className="pl-[6px] text-[13px] leading-4 text-[#4a8aa8]">全局计算</p>
      <button type="button" className="ml-[11px] mt-1 flex h-5 items-center gap-[6px] self-start">
        <Svg size={10} vb={10}><path d="M0 3h10M0 7h10" stroke={PINK} strokeWidth="1.800" /></Svg>
        计算
        <Caret />
      </button>
      <div className="mt-[13px] flex h-[21px] items-center px-[5px]">
        <label htmlFor="tag" className="w-[37px]">标签:</label>
        <input id="tag" defaultValue="全局计算 3" className="h-[19px] min-w-0 flex-1 border border-[#cdd3d9] bg-white px-[2px] outline-none" />
        <IconBox label="重命名">
          <Svg><path d="M2 8V2.500h12.500v12H7M2 4h12M6 7.500h6M6 10.500h6" stroke="#71838a" strokeWidth="1.300" /><path d="M1 15l4-4M2 11h3v3" stroke="#2f9b75" strokeWidth="1.300" /></Svg>
        </IconBox>
      </div>
      <div className="mt-[10px]">
        <SectionTitle title="数据" />
        <div className="mb-2 mt-2 px-[5px]">
          <Field id="ds" label="数据集:">
            <Select id="ds" value="研究 1/参数化解 1 (sol4)" />
            <IconBox label="转到数据集">
              <Svg><path d="M1 2.500h5M3 5.500h4M1 8.500h5M3 11.500h4M1 14h5" stroke={BLUE} strokeWidth="1.200" /><path d="M9 7.500h4.500V14H11M11 5L8.500 7.500 11 10" stroke={BLUE} strokeWidth="1.200" /></Svg>
            </IconBox>
          </Field>
          <Field id="gap" label="参数选择 (gap):"><Select id="gap" value="全部" /></Field>
          <Field id="t0" label="参数选择 (t0):"><Select id="t0" value="全部" /></Field>
          <Field id="neff" label="有效模式折射率 选择:"><Select id="neff" value="手动" /></Field>
          <Field id="idx" label="有效模式折射率 索引 (1-1):">
            <input id="idx" className="h-[19px] min-w-0 flex-1 border border-[#cdd3d9] bg-white px-1 outline-none" />
            <IconBox label="范围">
              <Svg><path d="M1.500 1v11.500M14.500 1v11.500" stroke="#8a8286" strokeWidth="1.300" /><path d="M2 11.500q2-5 4 0 2-5 4 0 2-5 4 0" stroke="#9b7f84" /><path d="M1 14.500h14" stroke="#76797d" strokeDasharray="2 1" /></Svg>
            </IconBox>
          </Field>
          <Field id="cols" label="表列:">
            <Select id="cols" value="仅数据" hot />
          </Field>
        </div>
      </div>
      <SectionTitle title="表达式">
        <div className="ml-auto flex items-center gap-[6px]">
          <button type="button" aria-label="添加表达式" className="flex items-center gap-2"><Svg size={13} vb={13}><path d="M6.500 0v13M0 6.500h13" stroke={BLUE} strokeWidth="1.200" /></Svg><Caret /></button>
          <button type="button" aria-label="替换表达式" className="ml-1 flex items-center gap-[6px]"><RangeInsert /><Caret /></button>
        </div>
      </SectionTitle>
      <div className="mx-[5px] mt-[9px] h-[199px] border border-b-2 border-[#cfd1d4] bg-[#fcfcfd]">
        <table className="w-full table-fixed border-collapse text-left">
          <colgroup>
            <col className="w-[174px]" />
            <col className="w-[60px]" />
            <col />
          </colgroup>
          <thead className="bg-[#f0f0f0]">
            <tr className="h-[28px]">
              <th className="border-r border-[#a8a8a8] p-0 align-bottom font-normal">
                <div className="relative pl-[18px] leading-[22px]">
                  表达式
                  <svg width="9" height="8" viewBox="0 0 9 8" className="absolute -top-[2px] left-1" aria-hidden="true"><path d="M0 0l4.500 4L0 8zM4.500 0L9 4 4.500 8z" fill="#111" /></svg>
                </div>
              </th>
              <th className="border-r border-[#a8a8a8] p-0 pl-[5px] align-bottom font-normal leading-[22px]">单位</th>
              <th className="border-r border-[#a8a8a8] p-0 pl-[5px] align-bottom font-normal leading-[22px]">描述</th>
            </tr>
          </thead>
          <tbody className="bg-white">
            <tr className="h-[21px] border-b border-[#a8a8a8]">
              <td className="border-r border-[#a8a8a8] p-0 pl-[3px] leading-4">Loss</td>
              <td className="border-r border-[#a8a8a8] p-0 pl-[3px] leading-4">dB/cm</td>
              <td className="border-r border-[#a8a8a8] p-0 pl-[3px] leading-4">Loss</td>
            </tr>
            <tr className="h-[21px] border-b border-[#a8a8a8]">
              <td className="border-r border-[#a8a8a8]" />
              <td className="border-r border-[#a8a8a8]" />
              <td className="border-r border-[#a8a8a8]" />
            </tr>
          </tbody>
        </table>
      </div>
      <div className="mt-[7px] flex h-4 items-center pl-2">
        <button type="button" aria-label="上移"><ArrowIcon turn="rotate-90" color={GRAY} /></button>
        <button type="button" aria-label="下移" className="ml-[9px]"><ArrowIcon turn="-rotate-90" color={GRAY} /></button>
        <button type="button" aria-label="删除行" className="ml-[9px]"><Svg><path d="M1 2.500h2M4 2.500h11M1 7.500h2M4 7.500h11M1 12.500h2M4 12.500h4" stroke={GRAY} strokeWidth="1.400" /><path d="M10 10.500l5 5M15 10.500l-5 5" stroke={GRAY} /></Svg></button>
        <button type="button" aria-label="清除" className="ml-[7px]"><Svg><path d="M4 1l3 6" stroke="#9a7a50" strokeWidth="1.600" /><path d="M5 8l4-2 5 8-5 1.500z" fill="#e9b15a" /></Svg></button>
        <button type="button" aria-label="载入" className="ml-[6px] flex items-center gap-[7px]"><Folder color="#e3a043" /><Caret /></button>
        <button type="button" aria-label="保存" className="ml-[11px]"><Disk /></button>
        <button type="button" aria-label="插入" className="ml-2 flex items-center gap-1"><RangeInsert color={GRAY} /><Caret color="#555" /></button>
      </div>
      <div className="mb-[10px] flex flex-col px-[5px]">
        <label htmlFor="expr" className="mt-[6px] leading-4">表达式:</label>
        <input id="expr" disabled className="mt-[7px] h-[19px] border border-[#e0e4ea] bg-[#fafbfe]" />
        <label htmlFor="desc" className="mt-[6px] leading-4">描述:</label>
        <input id="desc" disabled className="mt-[7px] h-[19px] border border-[#e0e4ea] bg-[#fafbfe]" />
      </div>
      <SectionTitle title="数据系列运算" />
      <div className="mt-[6px] px-[5px]">
        <div className="flex h-[27px] items-center"><label htmlFor="norm" className="w-[49px]">归一化:</label><Select id="norm" value="无" /></div>
        <div className="flex h-[27px] items-center"><label htmlFor="trans" className="w-[49px]">变换:</label><Select id="trans" value="无" /></div>
      </div>
    </section>
  );
}

/* ---------- field plot ---------- */

const S = 0.4065;
const px = (x: number) => 448 + x * S;
const py = (y: number) => 612 - y * S;
const LEFT = 49;
const RIGHT = 990;
const TOP = 36;
const BOTTOM = 696;

const CMAP: [number, number, number, number][] = [
  [0, 60, 56, 197], [10, 71, 70, 216], [20, 81, 81, 240], [30, 94, 112, 252], [40, 116, 165, 250],
  [50, 126, 200, 251], [60, 141, 230, 251], [70, 158, 249, 245], [80, 169, 252, 219], [90, 196, 252, 184],
  [100, 223, 250, 151], [110, 238, 248, 142], [120, 242, 229, 133], [130, 243, 200, 110], [140, 241, 154, 86],
  [150, 238, 111, 73], [160, 228, 71, 63], [170, 204, 44, 46], [180, 178, 32, 36],
];

function colour(v: number) {
  const c = Math.max(0, Math.min(179.9, v)) / 10;
  const i = Math.floor(c);
  const a = CMAP[i];
  const b = CMAP[i + 1];
  const m = (k: number) => Math.round(a[k] + (b[k] - a[k]) * (c - i));
  return `rgb(${m(1)},${m(2)},${m(3)})`;
}

// cubic hermite through (xs, vs), any spacing; flat where it starts on the symmetry axis
function spline(xs: number[], vs: number[], x: number) {
  const n = xs.length;
  if (x <= xs[0]) return vs[0];
  if (x >= xs[n - 1]) return vs[n - 1];
  let i = 0;
  while (x > xs[i + 1]) i++;
  const secant = (k: number) => (vs[k + 1] - vs[k]) / (xs[k + 1] - xs[k]);
  const slope = (k: number) => {
    if (k === 0) return xs[0] === 0 ? 0 : secant(0);
    if (k === n - 1) return secant(n - 2);
    const l = secant(k - 1);
    const r = secant(k);
    return l * r <= 0 ? 0 : (2 * l * r) / (l + r);
  };
  const h = xs[i + 1] - xs[i];
  const t = (x - xs[i]) / h;
  const t2 = t * t;
  const t3 = t2 * t;
  return (2 * t3 - 3 * t2 + 1) * vs[i] + (t3 - 2 * t2 + t) * h * slope(i) + (3 * t2 - 2 * t3) * vs[i + 1] + (t3 - t2) * h * slope(i + 1);
}

type Grid = { xs: number[]; ys: number[]; rows: number[][] };

const XS = [0, 100, 200, 300, 400, 500, 600, 700, 800, 900, 1000, 1200, 1340];

const LOWER: Grid = {
  xs: XS,
  ys: [-210, -150, -100, -50, 0, 50, 100, 150, 220],
  rows: [
    [52, 51, 48, 43, 38, 34, 29, 25, 20, 17, 14, 10, 8],
    [71, 69, 65, 60, 52, 45, 39, 32, 25, 20, 17, 12, 9],
    [88, 86, 80, 74, 67, 60, 51, 41, 32, 25, 20, 14, 11],
    [103, 101, 96, 88, 79, 71, 62, 51, 40, 31, 25, 17, 13],
    [120, 118, 113, 104, 96, 87, 76, 63, 49, 38, 29, 19, 14],
    [147, 144, 136, 124, 112, 99, 84, 70, 57, 44, 34, 22, 16],
    [163, 161, 153, 139, 122, 106, 89, 74, 61, 48, 37, 23, 17],
    [172, 169, 162, 149, 129, 111, 92, 74, 61, 47, 36, 23, 17],
    [177, 173, 165, 151, 131, 111, 89, 69, 54, 40, 30, 19, 14],
  ],
};

const RIB: Grid = {
  xs: [0, 100, 200, 300, 400, 450, 500, 550],
  ys: [220, 250, 300, 350, 400],
  rows: [
    [177, 173, 165, 151, 131, 121, 111, 100],
    [174, 171, 162, 146, 123, 110, 96, 84],
    [163, 159, 151, 133, 107, 92, 77, 70],
    [143, 140, 132, 116, 94, 81, 68, 62],
    [112, 110, 106, 97, 84, 75, 67, 64],
  ],
};

const SIDE: Grid = {
  xs: [500, 550, 600, 650, 700, 800, 900, 1000, 1200, 1340],
  ys: [220, 250, 300, 350, 400],
  rows: [
    [112, 107, 89, 78, 69, 54, 40, 30, 19, 14],
    [114, 108, 87, 74, 64, 48, 37, 28, 18, 13],
    [107, 100, 80, 67, 57, 42, 32, 25, 16, 11],
    [90, 84, 71, 60, 51, 37, 28, 22, 14, 10],
    [67, 66, 60, 53, 45, 32, 24, 19, 12, 8],
  ],
};

const UPPER: Grid = {
  xs: XS,
  ys: [400, 450, 500, 550, 600, 650, 700, 800, 900, 1000, 1100, 1200, 1420],
  rows: [
    [112, 110, 106, 97, 84, 67, 60, 45, 32, 24, 19, 12, 8],
    [98, 97, 93, 85, 75, 63, 51, 39, 29, 22, 17, 10, 7],
    [81, 80, 77, 72, 64, 54, 43, 33, 25, 19, 15, 9, 6],
    [67, 66, 63, 59, 52, 44, 35, 27, 21, 17, 13, 8, 5],
    [53, 52, 50, 46, 41, 35, 29, 23, 18, 14, 11, 7, 4],
    [42, 41, 39, 36, 32, 28, 24, 20, 16, 12, 9, 6, 3],
    [34, 34, 32, 30, 27, 24, 20, 18, 15, 10, 7, 4, 3],
    [25, 25, 24, 22, 19, 17, 15, 13, 12, 8, 5, 4, 3],
    [18, 18, 17, 16, 14, 13, 12, 10, 8, 5, 4, 3, 2],
    [14, 14, 13, 12, 11, 10, 8, 7, 5, 4, 3, 2, 2],
    [9, 9, 9, 8, 8, 7, 6, 5, 4, 3, 3, 2, 2],
    [6, 6, 6, 5, 5, 5, 4, 4, 3, 3, 2, 2, 2],
    [3, 3, 3, 3, 3, 3, 3, 3, 2, 2, 2, 2, 2],
  ],
};

function sample(g: Grid, x: number, y: number) {
  return spline(g.ys, g.rows.map((r) => spline(g.xs, r, x)), y);
}

const slant = (y: number) => 550 - ((y - 220) / 180) * 55;

function field(x: number, y: number) {
  const a = Math.abs(x);
  if (y > 720 && a > 750) return 1;
  // bright spot at the electrode corner
  const spot = 7 * Math.exp(-((a - 745) ** 2 + (y - 710) ** 2) / 2600);
  if (y > 400) return sample(UPPER, a, y) + spot;
  if (y <= 220) return sample(LOWER, a, y);
  return a < slant(y) ? sample(RIB, a, y) : sample(SIDE, a, y);
}

const STRIP = 3;
const STRIPS = Array.from({ length: (BOTTOM - TOP) / STRIP }, (_, r) => {
  const top = TOP + r * STRIP;
  const y = (612 - (top + STRIP / 2)) / S;
  const stops = Array.from({ length: 61 }, (_, i) => (LEFT + ((RIGHT - LEFT) * i) / 60 - 448) / S);
  const jump = y > 720 ? 750 : y > 220 && y < 400 ? slant(y) : 0;
  if (jump) stops.push(-jump - 0.5, -jump + 0.5, jump - 0.5, jump + 0.5);
  stops.sort((a, b) => a - b);
  return { top, stops: stops.map((x) => ({ at: (px(x) - LEFT) / (RIGHT - LEFT), fill: colour(field(x, y)) })) };
});

const X_TICKS = [-800, -600, -400, -200, 0, 200, 400, 600, 800, 1000, 1200];
const Y_TICKS = [1300, 1200, 1100, 1000, 900, 800, 700, 600, 500, 400, 300, 200, 100, 0, -100, -200];
const BAR_TICKS = [20, 40, 60, 80, 100, 120, 140, 160];
const barY = (v: number) => 690 - v * 3.455;

function FieldPlot() {
  return (
    <svg viewBox="0 0 1082 719" className="block w-full bg-white font-['DejaVu_Sans','Noto_Sans_CJK_SC',sans-serif] text-[12px]" fill="#1a1a1a" role="img" aria-label="表面: 电场模 (V/m)">
      <defs>
        {STRIPS.map((s, i) => (
          <linearGradient key={i} id={`row${i}`}>
            {s.stops.map((p, k) => <stop key={k} offset={p.at} stopColor={p.fill} />)}
          </linearGradient>
        ))}
        <linearGradient id="bar" x1="0" x2="0" y1="1" y2="0">
          {CMAP.map((c) => <stop key={c[0]} offset={c[0] / 180} stopColor={`rgb(${c[1]},${c[2]},${c[3]})`} />)}
        </linearGradient>
      </defs>
      <text x="16" y="26">gap=1.5 um, t0=4 um 有效模式折射率=1.5235-0.03403i 1</text>
      <text x="467" y="26">表面: 电场模 (V/m)</text>
      <text x="2" y="41" fontSize="11">nm</text>
      {STRIPS.map((s, i) => <rect key={i} x={LEFT} y={s.top} width={RIGHT - LEFT} height={STRIP} fill={`url(#row${i})`} shapeRendering="crispEdges" />)}
      <g fill="none" stroke="#0c1030" strokeWidth="1.200">
        <path d={`M${px(-750)} ${TOP}V${py(720)}M${px(750)} ${TOP}V${py(720)}`} />
        <path d={`M${LEFT} ${py(720)}H${px(-550)}L${px(-495)} ${py(1120)}H${px(495)}L${px(550)} ${py(720)}H${RIGHT}`} />
        <path d={`M${LEFT} ${py(220)}H${px(-550)}L${px(-495)} ${py(400)}H${px(495)}L${px(550)} ${py(220)}H${RIGHT}`} />
        <path d={`M${LEFT} ${py(0)}H${RIGHT}`} />
      </g>
      <rect x={LEFT} y={TOP} width={RIGHT - LEFT} height={BOTTOM - TOP} fill="none" stroke="#15155a" strokeWidth="1.300" />
      {X_TICKS.map((t) => (
        <g key={t}>
          <path d={`M${px(t)} ${TOP}v6M${px(t)} ${BOTTOM}v-6`} stroke="#15155a" strokeWidth="1.300" />
          <text x={px(t)} y="714" textAnchor="middle">{t}</text>
        </g>
      ))}
      <path d={`M${LEFT} ${py(1400)}h6M${RIGHT} ${py(1400)}h-6`} stroke="#15155a" strokeWidth="1.300" />
      {Y_TICKS.map((t) => (
        <g key={t}>
          <path d={`M${LEFT} ${py(t)}h6M${RIGHT} ${py(t)}h-6`} stroke="#15155a" strokeWidth="1.300" />
          <text x="45" y={py(t) + 5} textAnchor="end">{t}</text>
        </g>
      ))}
      <text x="974" y="714" fontSize="11">nm</text>
      <rect x="1011" y="70" width="15" height="620" fill="url(#bar)" stroke="#333" />
      {BAR_TICKS.map((t) => (
        <g key={t}>
          <path d={`M1011 ${barY(t)}h3M1026 ${barY(t)}h-3`} stroke="#222" />
          <text x="1034" y={barY(t) + 4}>{t}</text>
        </g>
      ))}
      <rect x="1060" y="9" width="14" height="11" rx="3" fill="#27418c" />
      <path d="M1062 11h6q3 0 3 3.500t-3 3.500h-6z" fill="#b9d3d4" />
    </svg>
  );
}

/* ---------- graphics panel ---------- */

function Tab({ label, active = false, close = false }: { label: string; active?: boolean; close?: boolean }) {
  return (
    <div className={`flex items-center border-b-2 px-1 ${active ? "border-[#4a86ad] text-[#3f7ba5]" : "border-transparent text-[#555]"}`}>
      <button type="button">{label}</button>
      {close && (
        <button type="button" aria-label={`关闭${label}`} className="ml-2 mt-1">
          <Svg size={9} vb={9}><path d="M0.500 0.500l8 8M8.500 0.500l-8 8" stroke="#b9bcc0" strokeWidth="1.100" /></Svg>
        </button>
      )}
    </div>
  );
}

const Zoom = ({ sign, box = false }: { sign: string; box?: boolean }) => (
  <Svg>
    {box && <path d="M1 3v11h8M1 3h3" stroke={BLUE} strokeDasharray="2 1" />}
    <circle cx="7.500" cy="6.500" r="5" stroke={BLUE} strokeWidth="1.700" />
    <path d={sign} stroke={BLUE} strokeWidth="1.400" />
    <path d="M11 10.500l4 4" stroke={BLUE} strokeWidth="2.400" />
  </Svg>
);

function GraphicsTools() {
  const sep = <span className="h-4 w-px bg-[#d3d6db]" />;
  return (
    <div className="flex h-[26px] items-center gap-2 pl-[6px]">
      <button type="button" aria-label="放大"><Zoom sign="M7.500 4v5M5 6.500h5" /></button>
      <button type="button" aria-label="缩小" className="-ml-px"><Zoom sign="M5 6.500h5" /></button>
      <button type="button" aria-label="缩放框" className="flex items-center gap-[6px]"><Zoom sign="M7.500 4v5M5 6.500h5" box /><Caret /></button>
      <button type="button" aria-label="缩放到窗口大小" className="ml-[3px]">
        <Svg><path d="M0.500 0.500h15v15h-15z" stroke="#71a2c2" /><path d="M8 2v12M2 8h12M6 4l2-2.500L10 4M6 12l2 2.500 2-2.500M4 6L1.500 8 4 10M12 6l2.500 2L12 10" stroke={BLUE} strokeWidth="1.300" /></Svg>
      </button>
      {sep}
      <button type="button" aria-label="视图方向" className="-ml-[2px] flex items-center gap-[6px]"><Axes /><Caret /></button>
      {sep}
      <button type="button" aria-label="栅格" className="-mx-[2px] flex h-5 w-5 items-center justify-center border border-[#8fbbd8] bg-[#cfe4f3]">
        <Svg size={15} vb={16}><path d="M1 1h14v14H1z" stroke={BLUE} strokeWidth="1.300" /><path d="M4 4h9v9H4zM4 7h9M4 10h9M7 4v9M10 4v9" stroke={BLUE} /></Svg>
      </button>
      {sep}
      <button type="button" aria-label="颜色" className="flex items-center gap-[6px]">
        <Svg><path d="M9 1q6 0 6 5 0 7-7 9-6 1-6-3 0-2 3-3-3-3 0-6 1-2 4-2z" fill="#ead3cf" stroke="#a97e78" /><circle cx="8" cy="5" r="1.800" stroke="#667" /><circle cx="11.500" cy="7" r="1.300" fill="#5b9bd0" /><circle cx="9" cy="11" r="1.300" fill="#d04d42" /><circle cx="5" cy="12" r="1.300" fill="#57a05e" /></Svg>
        <Caret />
      </button>
      {sep}
      <button type="button" aria-label="图像快照选项" className="flex items-center gap-[6px]">
        <Svg><circle cx="8" cy="8" r="5.200" stroke={BLUE} strokeWidth="4" strokeDasharray="4.300 1.100" /></Svg>
        <Caret />
      </button>
      <button type="button" aria-label="图像快照" className="ml-1">
        <Svg><path d="M0 4h4l1.500-2h5L12 4h4v10H0z" fill={BLUE} /><circle cx="8" cy="9" r="3.200" stroke="#fff" strokeWidth="1.300" /></Svg>
      </button>
      <button type="button" aria-label="打印">
        <Svg><path d="M3.500 6V1h9v5" fill="#fff" stroke={BLUE} strokeWidth="1.300" /><path d="M1 6h14v6H1z" fill="#9fc9e5" stroke={BLUE} strokeWidth="1.300" /><path d="M3.500 10h9v5.500h-9z" fill="#fff" stroke={BLUE} strokeWidth="1.300" /></Svg>
      </button>
    </div>
  );
}

function Graphics() {
  return (
    <main className="flex min-w-0 flex-1 flex-col gap-[7px]">
      <section className="overflow-hidden rounded-t-md bg-[#f9fafe]">
        <div className="flex h-[34px] items-stretch border-b border-[#d3d9df] pl-2 pr-1 text-[13px]">
          <Tab label="图形" active />
          <div className="ml-[19px] flex gap-[22px]">
            <Tab label="查找和替换" close />
            <Tab label="收敛图 1" close />
            <Tab label="收敛图 2" close />
          </div>
          <div className="ml-auto flex items-center"><PanelControls tone="#b4b6bb" /></div>
        </div>
        <GraphicsTools />
        <FieldPlot />
      </section>
      <section className="flex-1 rounded-t-md bg-[#f9fafe]">
        <div className="flex h-[34px] items-stretch border-b border-[#d3d9df] pl-2 pr-1 text-[13px]">
          <Tab label="消息" close />
          <div className="ml-[22px] flex gap-[19px]">
            <Tab label="进度" />
            <Tab label="日志" />
            <Tab label="表格 1" active close />
          </div>
          <div className="ml-auto flex items-center"><PanelControls tone="#b4b6bb" /></div>
        </div>
      </section>
    </main>
  );
}

/* ---------- taskbar ---------- */

const TASKS: { name: string; icon: ReactNode; dot?: boolean; active?: boolean }[] = [
  { name: "任务视图", icon: <Svg size={24} vb={24}><path d="M8 2h15v17H8z" fill="#eef0f2" /><path d="M1 5h17v17H1z" fill="#26282b" /><path d="M8 5h10v10H8z" fill="#b9bcc0" /></Svg> },
  { name: "文件资源管理器", dot: true, icon: <Svg size={24} vb={24}><path d="M0 2h9l2 3h13v17H0z" fill="#e3a91f" /><path d="M0 6h24v17H0z" fill="#fcd14e" /><path d="M4 17q0-2 2-2h12q2 0 2 2v6H4z" fill="#1e7fc6" /></Svg> },
  { name: "Chrome", dot: true, icon: (
    <Svg size={24} vb={24}>
      <circle cx="12" cy="12" r="11.500" fill="#f5bd18" />
      <path d="M2 6A11.500 11.500 0 0 1 22.500 7H12l-4.500 6z" fill="#df4232" />
      <path d="M2 6a11.500 11.500 0 0 0 9 17.500l5-9-4 2-4.500-3z" fill="#2f9e50" />
      <circle cx="12" cy="12" r="5.500" fill="#fff" /><circle cx="12" cy="12" r="4.300" fill="#3c7de6" />
    </Svg>
  ) },
  { name: "控制面板", icon: <Svg size={24} vb={24}><path d="M0.500 3.500h23v17h-23z" fill="#7fd0ef" stroke="#3794bd" /><circle cx="8.500" cy="11" r="5" fill="#e8f7fd" /><path d="M8.500 11V6a5 5 0 0 1 5 5z" fill="#f0a32d" /><path d="M8.500 11v5a5 5 0 0 1-5-5z" fill="#2b6cb5" /><path d="M15 7l6-2v5zM15 13h6M15 16h6M4 18h10" stroke="#e8f7fd" strokeWidth="1.500" /></Svg> },
  { name: "COMSOL", active: true, icon: <AppLogo size={18} /> },
  { name: "猫", dot: true, icon: <Svg size={24} vb={24}><path d="M7 2l2 4h6l2-4 1 6 1 12q0 2-2 2H6q-2 0-2 0l1-10z" fill="#1f3763" /><path d="M9 9h1.500M13.500 9H15" stroke="#9bc2f0" strokeWidth="1.300" /></Svg> },
  { name: "PDF", dot: true, icon: <Svg size={24} vb={24}><path d="M0 0h17l7 7v17H0z" fill="#5b2260" /><path d="M17 0v7h7z" fill="#e9dcec" /><path d="M16 6q-6-3-8 3t3 6 5-5h-5" stroke="#fff" strokeWidth="2.200" /><text x="12" y="22" fontSize="6" fontWeight="700" textAnchor="middle" fill="#fff">PDF</text></Svg> },
  { name: "网盘", dot: true, icon: <Svg size={24} vb={24}><rect width="24" height="24" rx="5" fill="#fff" /><circle cx="12" cy="8" r="3.700" stroke="#2fa3e0" strokeWidth="2.400" /><circle cx="7" cy="14.500" r="3.700" stroke="#e2537c" strokeWidth="2.400" /><circle cx="17" cy="14.500" r="3.700" stroke="#1fb6cf" strokeWidth="2.400" /><path d="M8 22.500h8" stroke="#d9534a" strokeWidth="1.500" /></Svg> },
  { name: "设置", dot: true, icon: <Svg size={24} vb={24}><circle cx="12" cy="12" r="10" stroke="#6b7683" strokeWidth="3.500" strokeDasharray="6 1.850" /><circle cx="12" cy="12" r="7" stroke="#8a95a2" strokeWidth="5" /><circle cx="12" cy="12" r="4.500" fill="#2d5c8c" stroke="#fff" /></Svg> },
  { name: "会议", dot: true, icon: <Svg size={24} vb={24}><rect width="24" height="24" rx="4" fill="#1f7bea" /><path d="M4 16q1-7 4-7t4 6q1-6 4-6t4 7q-3 1-5-1-3 3-6 0-2 2-5 1z" fill="#fff" /></Svg> },
  { name: "微信", dot: true, icon: <Svg size={24} vb={24}><ellipse cx="9" cy="9.500" rx="8.500" ry="7.500" fill="#2ecf6c" /><path d="M4 14l-1 4 4-2z" fill="#2ecf6c" /><circle cx="6" cy="8" r="1.200" fill="#135e30" /><circle cx="12" cy="8" r="1.200" fill="#135e30" /><ellipse cx="17" cy="16" rx="6.500" ry="5.500" fill="#eceff1" /><circle cx="15" cy="15" r="1" fill="#777" /><circle cx="19" cy="15" r="1" fill="#777" /></Svg> },
  { name: "EDT", dot: true, icon: <Svg size={24} vb={24}><path d="M0 0h24v24H0z" fill="#0d0d0d" /><path d="M8 3q-3 5 0 10M4.500 2q-4 6 0 12M16 3q3 5 0 10M19.500 2q4 6 0 12" stroke="#d99a3b" strokeWidth="1.400" /><path d="M12 5v9" stroke="#e8b566" strokeWidth="2" /><text x="12" y="21" fontSize="8" fontWeight="700" textAnchor="middle" fill="#fff">EDT</text></Svg> },
];

function Taskbar() {
  return (
    <footer className="relative flex h-12 items-center border-b-2 border-t border-b-[#c9efd9] border-t-[#aeb3c0] bg-linear-to-r from-[#e2e9f4] via-[#d6dffb] to-[#e2ecf6] pl-[21px]">
      <button type="button" aria-label="开始">
        <Svg size={23} vb={23}><path d="M0 0h11v11H0zM12 0h11v11H12zM0 12h11v11H0zM12 12h11v11H12z" fill="#1f93dc" /><path d="M0 0h11v11H0z" fill="#46b8ec" /></Svg>
      </button>
      <label className="ml-[14px] flex h-[30px] w-[217px] items-center gap-[9px] rounded-full bg-[#f6f8fd] px-3 shadow-sm">
        <Svg size={15} vb={15}><circle cx="6.500" cy="6" r="5" stroke="#333" strokeWidth="1.600" /><path d="M10 10l4 4.500" stroke="#333" strokeWidth="1.800" /></Svg>
        <input aria-label="搜索" placeholder="搜索" className="w-full bg-transparent text-[14px] placeholder-[#555] outline-none" />
      </label>
      <div className="ml-1 flex">
        {TASKS.map((t) => (
          <button key={t.name} type="button" aria-label={t.name} className="flex w-11 justify-center">
            <span className={`relative flex h-[38px] w-[38px] items-center justify-center rounded ${t.active ? "bg-[#f0f5fc]" : ""}`}>
              {t.icon}
              {t.dot && <span className="absolute bottom-0 h-[3px] w-[6px] rounded-full bg-[#7e8592]" />}
              {t.active && <span className="absolute bottom-0 h-[3px] w-4 rounded-full bg-[#1f74b8]" />}
            </span>
          </button>
        ))}
      </div>
      <div className="ml-auto flex items-center pr-6">
        <div className="relative mr-[2px] h-[30px] w-[30px]">
          <span className="absolute bottom-1 left-0 h-5 w-5 rounded-full bg-linear-to-b from-[#f5b73a] to-[#ec7623]" />
          <span className="absolute right-[5px] top-0 h-4 w-4 rounded-full bg-[#bf2b25] text-center text-[11px] leading-4 text-white">1</span>
        </div>
        <p className="mr-[134px] text-[12px] leading-4 text-[#333]">37°F<br />晴朗</p>
        <p className="text-right text-[12px] leading-4 text-[#555]">11:51<br />&nbsp;</p>
      </div>
      <time className="absolute -bottom-[2px] right-0 h-[25px] w-[136px] rounded-tl bg-[#50555d] pl-[6px] text-[12px] leading-[24px] text-white">2024/12/29 11:51:53</time>
    </footer>
  );
}

/* ---------- floating overlays ---------- */

function ImeBar() {
  return (
    <div className="absolute right-[2px] top-[101px] flex h-[26px] w-[196px] items-center gap-[9px] border border-[#c3ccd6] bg-[#fbfcfe] pl-8">
      <span className="absolute -left-[6px] -top-1 flex h-[30px] w-[30px] -rotate-6 items-center justify-center rounded-md bg-[#dc5428] text-[26px] font-bold leading-none text-white">S</span>
      <span className="text-[14px] font-bold text-[#1d6fb5]">英</span>
      <Svg size={15}><circle cx="3" cy="5" r="2" fill="#1d6fb5" /><path d="M10 8h3.500q0 4-3 5.500 1-2 0-3z" fill="#1d6fb5" /></Svg>
      <Svg size={15}><rect x="5" y="0" width="6" height="10" rx="3" fill="#1d6fb5" /><path d="M2 7q0 5 6 5t6-5M8 12v3M5 15.500h6" stroke="#1d6fb5" strokeWidth="1.600" /></Svg>
      <Svg size={15}><rect x="0.800" y="2.800" width="14.500" height="10.500" rx="1" stroke="#1d6fb5" strokeWidth="1.500" /><path d="M3 5.500h10M3 8h10M3 10.800h10" stroke="#1d6fb5" strokeWidth="1.500" strokeDasharray="1.500 1" /></Svg>
      <Svg size={15}><path d="M5 1q3 2 6 0l5 3-2 4-2-1v8H4V7L2 8 0 4z" fill="#6a6ce0" /></Svg>
      <Svg size={15}><g fill="#1d6fb5"><rect x="1" y="1" width="6" height="6" rx="2" /><circle cx="12" cy="4" r="3.300" /><rect x="1" y="9" width="6" height="6" rx="1" /><rect x="9" y="9" width="6" height="6" rx="1" /></g></Svg>
      <Svg size={15}><circle cx="8" cy="8.500" r="6.800" fill="#fff" stroke="#d9938a" strokeWidth="1.300" /><path d="M3 7h10v4q-5 3-10 0z" fill="#c8603a" /><circle cx="8" cy="9" r="2" fill="#f5ad3c" /></Svg>
    </div>
  );
}

function Watermark() {
  return (
    <div className="pointer-events-none absolute right-[35px] top-[40px] flex items-center gap-3">
      <span className="text-[36px] font-bold leading-[64px] text-white/90">opti-simulation</span>
      <span className="font-['Inter',sans-serif] text-[48px] font-bold leading-[50px] text-[#ebecee]/70">bilibili</span>
    </div>
  );
}

function Pointer() {
  return (
    <svg width="13" height="20" viewBox="0 0 13 20" className="pointer-events-none absolute left-[601px] top-[468px]" aria-hidden="true">
      <path d="M1 1v15l3.500-3 2.500 6 2.500-1-2.500-6H12z" fill="#fff" stroke="#222" />
    </svg>
  );
}

export default function App() {
  return (
    <div className="relative flex min-h-screen flex-col overflow-hidden bg-[#eeeef0] font-['Noto_Sans','Noto_Sans_CJK_SC',sans-serif]">
      <TitleBar />
      <MenuTabs />
      <Ribbon />
      <div className="mt-[7px] flex flex-1 gap-[7px] pl-[6px] pr-[5px]">
        <ModelBuilder />
        <Settings />
        <Graphics />
      </div>
      <div className="flex h-[34px] items-center bg-[#efefef]">
        <p className="w-full pl-[1241px] text-[12px] text-[#333]">3.16 GB | 3.78 GB</p>
      </div>
      <Taskbar />
      <Watermark />
      <ImeBar />
      <Pointer />
    </div>
  );
}
